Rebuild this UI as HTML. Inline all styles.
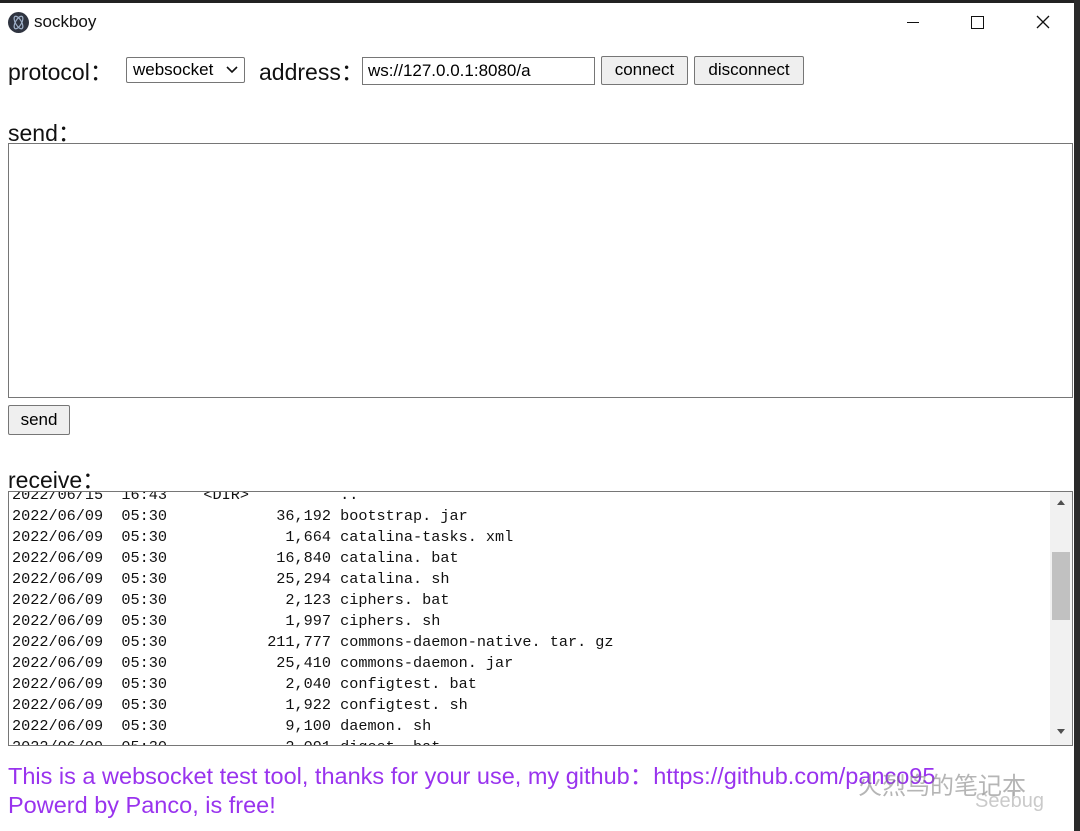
<!DOCTYPE html><html><head><meta charset="utf-8"><style>
body{margin:0;width:1080px;height:831px;background:#fff;position:relative;overflow:hidden;font-family:"Liberation Sans","Noto Sans CJK SC",sans-serif;}
.a{position:absolute}
.lbl{font-size:23px;color:#111;}
.btn{position:absolute;background:#efefef;border:1px solid #767676;border-radius:2px;font-size:17px;color:#000;text-align:center;box-sizing:border-box;line-height:26px}
pre{margin:0;font-family:"Liberation Mono",monospace;font-size:15.2px;line-height:21px;color:#111}
</style></head><body>
<div class="a" style="left:0;top:0;width:1080px;height:3px;background:#222"></div>
<div class="a" style="left:1074px;top:0;width:6px;height:831px;background:#2a2a2a"></div>
<div class="a" style="left:8px;top:12px;width:21px;height:21px;border-radius:50%;background:#2f3440"></div>
<svg class="a" style="left:8px;top:12px" width="21" height="21"><g fill="none" stroke="#9fb0c8" stroke-width="1.2"><ellipse cx="10.5" cy="10.5" rx="7" ry="3" transform="rotate(60 10.5 10.5)"/><ellipse cx="10.5" cy="10.5" rx="7" ry="3" transform="rotate(-60 10.5 10.5)"/></g></svg>
<div class="a" style="left:34px;top:12px;font-size:17px;color:#111">sockboy</div>
<div class="a" style="left:907px;top:22px;width:12px;height:1px;background:#111"></div>
<div class="a" style="left:971px;top:16px;width:11px;height:11px;border:1.3px solid #111"></div>
<svg class="a" style="left:1036px;top:15px" width="14" height="14"><path d="M1 1L13 13M13 1L1 13" stroke="#111" stroke-width="1.3"/></svg>
<div class="a lbl" style="left:8px;top:53px">protocol：</div>
<div class="a" style="left:126px;top:57px;width:119px;height:26px;border:1px solid #767676;border-radius:2px;box-sizing:border-box;font-size:17px;line-height:24px;padding-left:6px">websocket</div>
<svg class="a" style="left:226px;top:66px" width="12" height="8"><path d="M1 1L6 6L11 1" stroke="#111" stroke-width="1.6" fill="none"/></svg>
<div class="a lbl" style="left:259px;top:53px">address：</div>
<div class="a" style="left:362px;top:57px;width:233px;height:28px;border:1px solid #767676;box-sizing:border-box;font-size:17px;line-height:26px;padding-left:5px">ws://127.0.0.1:8080/a</div>
<div class="btn" style="left:601px;top:56px;width:87px;height:29px">connect</div>
<div class="btn" style="left:694px;top:56px;width:110px;height:29px">disconnect</div>
<div class="a lbl" style="left:8px;top:114px">send：</div>
<div class="a" style="left:8px;top:143px;width:1065px;height:255px;border:1px solid #767676;box-sizing:border-box"></div>
<div class="btn" style="left:8px;top:405px;width:62px;height:30px;line-height:28px">send</div>
<div class="a lbl" style="left:8px;top:461px">receive：</div>
<div class="a" style="left:8px;top:491px;width:1065px;height:255px;border:1px solid #767676;box-sizing:border-box;overflow:hidden">
<pre style="position:absolute;left:3px;top:-7px">2022/06/15  16:43    &lt;DIR&gt;          ..
2022/06/09  05:30            36,192 bootstrap. jar
2022/06/09  05:30             1,664 catalina-tasks. xml
2022/06/09  05:30            16,840 catalina. bat
2022/06/09  05:30            25,294 catalina. sh
2022/06/09  05:30             2,123 ciphers. bat
2022/06/09  05:30             1,997 ciphers. sh
2022/06/09  05:30           211,777 commons-daemon-native. tar. gz
2022/06/09  05:30            25,410 commons-daemon. jar
2022/06/09  05:30             2,040 configtest. bat
2022/06/09  05:30             1,922 configtest. sh
2022/06/09  05:30             9,100 daemon. sh
2022/06/09  05:30             2,091 digest. bat</pre>
<div class="a" style="left:1041px;top:0;width:22px;height:253px;background:#f1f1f1"></div>
<svg class="a" style="left:1047px;top:7px" width="10" height="8"><path d="M1 6L5 1L9 6Z" fill="#505050"/></svg>
<svg class="a" style="left:1047px;top:236px" width="10" height="8"><path d="M1 1L5 6L9 1Z" fill="#505050"/></svg>
<div class="a" style="left:1043px;top:60px;width:18px;height:68px;background:#c1c1c1"></div>
</div>
<div class="a" style="left:8px;top:762px;font-size:23.5px;color:#9933ee;line-height:29px;white-space:nowrap">This is a websocket test tool, thanks for your use, my github：https://github.com/panco95<br>Powerd by Panco, is free!</div>
<div class="a" style="left:858px;top:766px;font-size:24px;color:rgba(120,120,120,.55);white-space:nowrap">火烈鸟的笔记本</div>
<div class="a" style="left:975px;top:790px;font-size:20px;color:rgba(150,150,150,.5)">Seebug</div>
</body></html>
